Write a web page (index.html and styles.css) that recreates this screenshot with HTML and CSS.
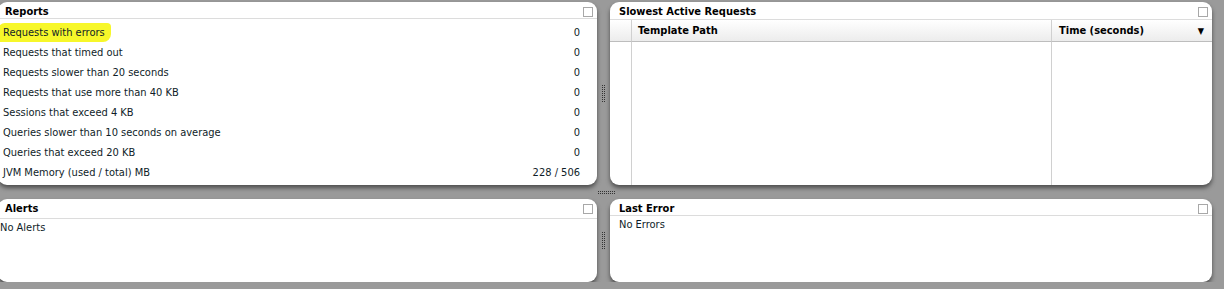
FILE: index.html
```html
<!DOCTYPE html>
<html>

<head>
  <meta charset="utf-8" />
  <title>Server Monitor</title>
  <link rel="stylesheet" href="styles.css">
</head>

<body>
  <div class="dash">
    <!-- 상단 왼쪽: 리포트 -->
    <section class="panel reports">
      <div class="panel-head">
        <h2>Reports</h2>
        <span class="min"></span>
      </div>
      <ul class="stats">
        <li><span class="mark">Requests with errors</span><span>0</span></li>
        <li><span>Requests that timed out</span><span>0</span></li>
        <li><span>Requests slower than 20 seconds</span><span>0</span></li>
        <li><span>Requests that use more than 40 KB</span><span>0</span></li>
        <li><span>Sessions that exceed 4 KB</span><span>0</span></li>
        <li><span>Queries slower than 10 seconds on average</span><span>0</span></li>
        <li><span>Queries that exceed 20 KB</span><span>0</span></li>
        <li><span>JVM Memory (used / total) MB</span><span>228 / 506</span></li>
      </ul>
    </section>

    <div class="split-v"><span class="grip-v"></span></div>

    <!-- 상단 오른쪽: 느린 요청 -->
    <section class="panel slowest">
      <div class="panel-head">
        <h2>Slowest Active Requests</h2>
        <span class="min"></span>
      </div>
      <div class="grid">
        <div class="gh"></div>
        <div class="gh">Template Path</div>
        <div class="gh sort">Time (seconds)<span class="arrow">&#9660;</span></div>
        <div class="gc"></div>
        <div class="gc"></div>
        <div class="gc"></div>
      </div>
    </section>

    <div class="split-h"><span class="grip-h"></span></div>

    <!-- 하단 -->
    <section class="panel alerts">
      <div class="panel-head">
        <h2>Alerts</h2>
        <span class="min"></span>
      </div>
      <div class="panel-body">No Alerts</div>
    </section>

    <div class="split-v"><span class="grip-v"></span></div>

    <section class="panel last-error">
      <div class="panel-head">
        <h2>Last Error</h2>
        <span class="min"></span>
      </div>
      <div class="panel-body">No Errors</div>
    </section>
  </div>
</body>

</html>
```

FILE: styles.css
```css
body {
  margin: 0;
  padding: 0;
  background-color: #9a9a9a;
  font-family: "DejaVu Sans Condensed", "Liberation Sans", sans-serif;
  font-size: 11px;
  color: #0f1d28;
  overflow: hidden;
}

.dash {
  display: grid;
  grid-template-columns: 599px 13px 602px;
  grid-template-rows: 183px 14px 83px;
  margin-left: -2px;
  padding-top: 2px;
}

.panel {
  display: flex;
  flex-direction: column;
  background-color: white;
  border-radius: 9px;
  box-shadow: 0 3px 4px #4f4f4f;
  overflow: hidden;
}

.panel-head {
  display: flex;
  justify-content: space-between;
  align-items: flex-start;
  height: 17px;
  padding: 3px 4px 0 7px;
  box-sizing: border-box;
  border-bottom: 1px solid #dcdcdc;
}

.panel-head h2 {
  margin: 0;
  font-size: 11px;
  font-weight: bold;
  color: black;
}

.min {
  width: 8px;
  height: 8px;
  border: 1px solid #a8a8a8;
  margin-top: 2px;
}

.slowest .panel-head,
.last-error .panel-head {
  padding-left: 9px;
}

.slowest .panel-head {
  height: 18px;
}

.alerts .panel-head {
  height: 20px;
}

.stats {
  list-style: none;
  margin: 0;
  padding: 3px 17px 0 5px;
}

.stats li {
  display: flex;
  justify-content: space-between;
  align-items: center;
  height: 20px;
}

.mark {
  background-color: #f7f72a;
  margin-left: -5px;
  padding: 3px 6px 3px 5px;
  border-radius: 7px 4px 8px 3px;
}

.panel-body {
  padding: 2px 0 0 2px;
}

.last-error .panel-body {
  padding: 2px 0 0 9px;
}

.grid {
  flex: 1;
  display: grid;
  grid-template-columns: 22px 420px 1fr;
  grid-template-rows: 22px 1fr;
}

.gh {
  display: flex;
  align-items: center;
  padding-left: 6px;
  font-weight: bold;
  color: black;
  background: linear-gradient(#ffffff, #ececec);
  border-bottom: 1px solid #bdbdbd;
  border-right: 1px solid #d0d0d0;
}

.gh:first-child {
  padding-left: 0;
}

.gh.sort {
  justify-content: space-between;
  padding: 0 8px 0 7px;
  border-right: 0;
}

.arrow {
  font-size: 9px;
}

.gc {
  border-right: 1px solid #d0d0d0;
}

.gc:last-child {
  border-right: 0;
}

.split-v {
  display: flex;
  justify-content: center;
  align-items: center;
}

.grip-v {
  width: 1px;
  height: 17px;
  border-left: 1px dotted #333;
  border-right: 1px dotted #333;
}

.split-h {
  grid-column: 1 / 4;
  display: flex;
  justify-content: center;
  align-items: center;
  padding-left: 2px;
}

.grip-h {
  width: 17px;
  height: 1px;
  border-top: 1px dotted #333;
  border-bottom: 1px dotted #333;
}
```
